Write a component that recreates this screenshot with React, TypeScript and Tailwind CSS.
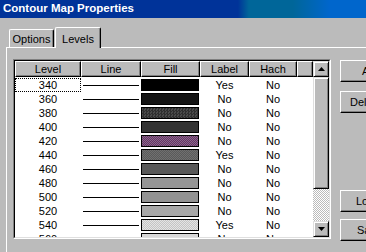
import React from "react";

const rows = [
  { level: "340", fill: "bg-[#000000]", label: "Yes", hach: "No" },
  { level: "360", fill: "bg-[#141414]", label: "No", hach: "No" },
  { level: "380", fill: "bg-[repeating-conic-gradient(#2e2e2e_0_25%,#4a4a4a_0_50%)] bg-[length:3px_3px]", label: "No", hach: "No" },
  { level: "400", fill: "bg-[#333333]", label: "No", hach: "No" },
  { level: "420", fill: "bg-[repeating-conic-gradient(#663366_0_25%,#8a6a8a_0_50%)] bg-[length:2px_2px]", label: "No", hach: "No" },
  { level: "440", fill: "bg-[repeating-conic-gradient(#5a5a5a_0_25%,#707070_0_50%)] bg-[length:2px_2px]", label: "Yes", hach: "No" },
  { level: "460", fill: "bg-[#585858]", label: "No", hach: "No" },
  { level: "480", fill: "bg-[#969696]", label: "No", hach: "No" },
  { level: "500", fill: "bg-[#939393]", label: "No", hach: "No" },
  { level: "520", fill: "bg-[#a8a8a8]", label: "No", hach: "No" },
  { level: "540", fill: "bg-[repeating-conic-gradient(#c4c4c4_0_25%,#e4e4e4_0_50%)] bg-[length:2px_2px]", label: "Yes", hach: "No" },
  { level: "560", fill: "bg-[#d8d8d8]", label: "No", hach: "No" },
];

const Head = ({ w, children }: { w: string; children?: React.ReactNode }) => (
  <div
    className={`${w} h-[16px] shrink-0 flex items-center justify-center border-t border-l border-r border-b border-t-white border-l-white border-r-black border-b-black shadow-[inset_-1px_-1px_0_#808080] leading-none`}
  >
    {children}
  </div>
);

const Arrow = ({ down }: { down?: boolean }) => (
  <svg width="7" height="4" viewBox="0 0 7 4">
    {down ? <polygon points="0,0 7,0 3.5,4" fill="#000" /> : <polygon points="3.5,0 7,4 0,4" fill="#000" />}
  </svg>
);

const SideButton = ({ children, className }: { children: React.ReactNode; className: string }) => (
  <div
    className={`${className} w-[60px] h-[22px] shrink-0 flex items-center justify-start whitespace-nowrap border-t border-l border-r border-b border-t-white border-l-white border-r-black border-b-black shadow-[inset_-1px_-1px_0_#808080]`}
  >
    {children}
  </div>
);

export default function App() {
  return (
    <div className="w-[366px] h-[252px] overflow-hidden bg-[#bbbbbb] font-['Liberation_Sans',Arial,sans-serif] text-[11px] text-black">
      {/* title bar */}
      <div className="h-[18px] flex items-center pl-[3px] text-white font-bold text-[11.5px] bg-[linear-gradient(to_right,#003399_0%,#003399_65%,#006699_68%,#006699_80%,#0066cc_90%,#0066cc_100%)]">
        Contour Map Properties
      </div>

      <div className="pl-[6px] pt-[9px]">
        {/* tabs */}
        <div className="flex items-end h-[20px] pl-[3px]">
          <div className="h-[18px] w-[45px] flex items-center justify-center border-t border-l border-r border-t-white border-l-white border-r-black rounded-tl-[2px] rounded-tr-[2px] shadow-[inset_-1px_0_0_#808080] pt-[2px]">
            Options
          </div>
          <div className="relative z-10 -mb-px ml-[1px] h-[21px] w-[46px] bg-[#bbbbbb] flex items-start justify-center pt-[3px] border-t border-l border-r border-t-white border-l-white border-r-black rounded-tl-[2px] rounded-tr-[2px] shadow-[inset_-1px_0_0_#808080]">
            Levels
          </div>
        </div>

        {/* panel */}
        <div className="border-t border-l border-white flex pl-[6px] pt-[11px] h-[210px]">
          {/* list view */}
          <div className="w-[318px] h-[180px] shrink-0 border-t border-l border-r border-b border-t-[#808080] border-l-[#808080] border-r-white border-b-white">
            <div className="h-full border-t border-l border-r border-b border-t-black border-l-black border-r-[#dfdfdf] border-b-[#dfdfdf] bg-white flex overflow-hidden">
              <div className="flex-1 flex flex-col overflow-hidden">
                <div className="flex bg-[#bbbbbb]">
                  <Head w="w-[66px]">Level</Head>
                  <Head w="w-[60px]">Line</Head>
                  <Head w="w-[59px]">Fill</Head>
                  <Head w="w-[49px]">Label</Head>
                  <Head w="w-[48px]">Hach</Head>
                  <Head w="w-[16px]" />
                </div>
                <div className="pt-[1px]">
                  {rows.map((r, i) => (
                    <div key={r.level} className="flex h-[14px] items-center">
                      <div className="w-[66px] h-full flex items-center justify-center">
                        <span
                          className={
                            i === 0
                              ? "w-full h-full flex items-center justify-center border border-dotted border-black"
                              : "w-full h-full flex items-center justify-center"
                          }
                        >
                          {r.level}
                        </span>
                      </div>
                      <div className="w-[60px] h-full flex items-center px-[2px]">
                        <div className="h-px w-full bg-black" />
                      </div>
                      <div className="w-[59px] h-full py-[1px]">
                        <div className={`${r.fill} h-full w-[58px] border border-black`} />
                      </div>
                      <div className="w-[49px] text-center">{r.label}</div>
                      <div className="w-[48px] text-center">{r.hach}</div>
                    </div>
                  ))}
                </div>
              </div>
              {/* scrollbar */}
              <div className="w-[16px] shrink-0 flex flex-col">
                <div className="h-[16px] shrink-0 flex items-center justify-center bg-[#bbbbbb] border-t border-l border-r border-b border-t-[#dfdfdf] border-l-[#dfdfdf] border-r-black border-b-black shadow-[inset_1px_1px_0_#fff,inset_-1px_-1px_0_#808080]">
                  <Arrow />
                </div>
                <div className="h-[112px] shrink-0 bg-[#bbbbbb] border-t border-l border-r border-b border-t-[#dfdfdf] border-l-[#dfdfdf] border-r-black border-b-black shadow-[inset_1px_1px_0_#fff,inset_-1px_-1px_0_#808080]" />
                <div className="flex-1 bg-[repeating-conic-gradient(#ffffff_0_25%,#bbbbbb_0_50%)] bg-[length:2px_2px]" />
                <div className="h-[16px] shrink-0 flex items-center justify-center bg-[#bbbbbb] border-t border-l border-r border-b border-t-[#dfdfdf] border-l-[#dfdfdf] border-r-black border-b-black shadow-[inset_1px_1px_0_#fff,inset_-1px_-1px_0_#808080]">
                  <Arrow down />
                </div>
              </div>
            </div>
          </div>

          {/* buttons */}
          <div className="ml-[9px] flex flex-col pt-[1px]">
            <SideButton className="pl-[21px]">Add</SideButton>
            <SideButton className="mt-[9px] pl-[9px]">Delete</SideButton>
            <SideButton className="mt-[77px] pl-[15px]">Load...</SideButton>
            <SideButton className="mt-[7px] pl-[16px]">Save...</SideButton>
          </div>
        </div>
      </div>
    </div>
  );
}
